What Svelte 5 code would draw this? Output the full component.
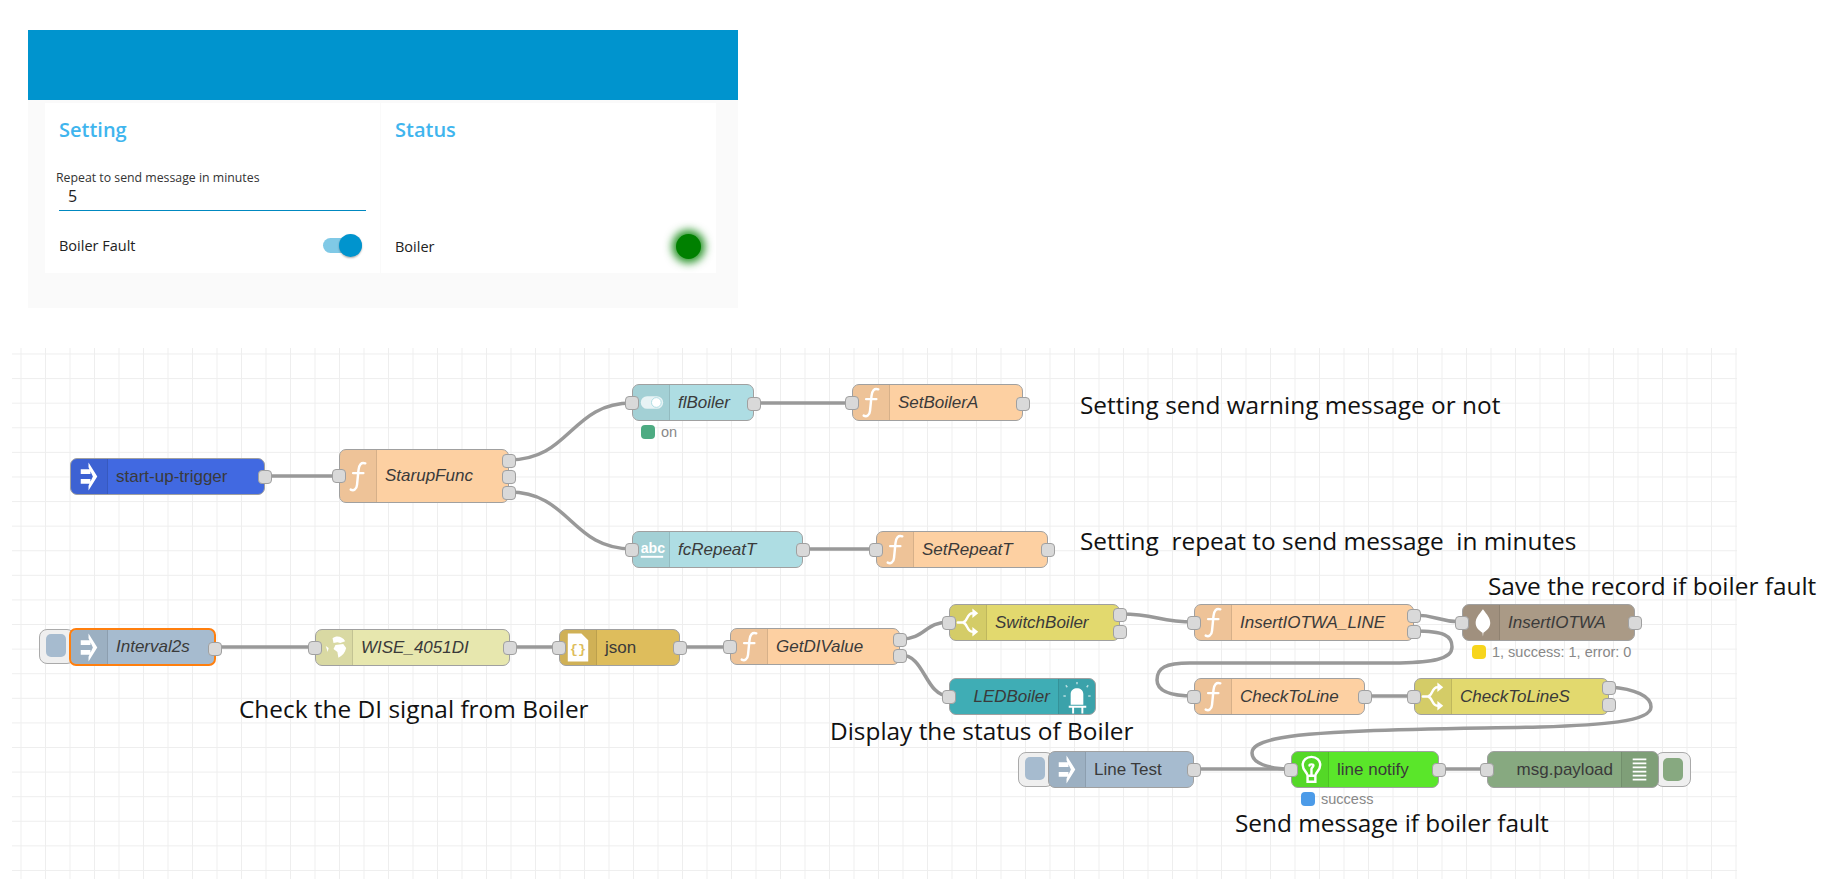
<script>
  // page coordinates of the editor canvas, node positions below are given in page px
  const ox = 12;
  const oy = 348;

  const nodes = [
    { label: 'start-up-trigger', x: 70, y: 458, w: 195, h: 37, color: '#4169e1', icon: 'inject', plain: true, out: [476] },
    { label: 'StarupFunc', x: 339, y: 449, w: 170, h: 54, color: '#fdd0a2', icon: 'func', inp: true, out: [460, 476, 492] },
    { label: 'flBoiler', x: 632, y: 384, w: 122, h: 37, color: '#aeddE3', icon: 'toggle', inp: true, out: [403], status: { color: '#4dab82', text: 'on', x: 641, y: 425 } },
    { label: 'SetBoilerA', x: 852, y: 384, w: 171, h: 37, color: '#fdd0a2', icon: 'func', inp: true, out: [403] },
    { label: 'fcRepeatT', x: 632, y: 531, w: 171, h: 37, color: '#aeddE3', icon: 'abc', inp: true, out: [549] },
    { label: 'SetRepeatT', x: 876, y: 531, w: 172, h: 37, color: '#fdd0a2', icon: 'func', inp: true, out: [549] },
    { label: 'Interval2s', x: 69, y: 628, w: 147, h: 38, color: '#a6bbcf', icon: 'inject', out: [647], btn: 'left', selected: true },
    { label: 'WISE_4051DI', x: 315, y: 629, w: 195, h: 37, color: '#e7e7ae', icon: 'globe', inp: true, out: [647] },
    { label: 'json', x: 559, y: 629, w: 121, h: 37, color: '#debd5c', icon: 'json', plain: true, inp: true, out: [647] },
    { label: 'GetDIValue', x: 730, y: 628, w: 170, h: 37, color: '#fdd0a2', icon: 'func', inp: true, out: [639, 655] },
    { label: 'SwitchBoiler', x: 949, y: 604, w: 171, h: 37, color: '#e2d96e', icon: 'switch', inp: true, out: [614, 631] },
    { label: 'LEDBoiler', x: 949, y: 678, w: 147, h: 37, color: '#3fadb5', icon: 'led', right: true, inp: true, out: [] },
    { label: 'InsertIOTWA_LINE', x: 1194, y: 604, w: 220, h: 37, color: '#fdd0a2', icon: 'func', inp: true, out: [615, 631] },
    { label: 'InsertIOTWA', x: 1462, y: 604, w: 173, h: 37, color: '#aa9a86', icon: 'leaf', inp: true, out: [622], status: { color: '#f7d51d', text: '1, success: 1, error: 0', x: 1472, y: 645 } },
    { label: 'CheckToLine', x: 1194, y: 678, w: 171, h: 37, color: '#fdd0a2', icon: 'func', inp: true, out: [696] },
    { label: 'CheckToLineS', x: 1414, y: 678, w: 195, h: 37, color: '#e2d96e', icon: 'switch', inp: true, out: [687, 704] },
    { label: 'Line Test', x: 1048, y: 751, w: 146, h: 37, color: '#a6bbcf', icon: 'inject', plain: true, out: [769], btn: 'left' },
    { label: 'line notify', x: 1291, y: 751, w: 148, h: 37, color: '#5ae62a', icon: 'bulb', plain: true, inp: true, out: [769], status: { color: '#4c9be8', text: 'success', x: 1301, y: 792 } },
    { label: 'msg.payload', x: 1487, y: 751, w: 172, h: 37, color: '#87a980', icon: 'debug', right: true, plain: true, inp: true, out: [], btn: 'right' }
  ];

  const links = [
    [265, 476, 339, 476],
    [509, 460, 632, 403],
    [509, 492, 632, 549],
    [754, 403, 852, 403],
    [803, 549, 876, 549],
    [216, 647, 315, 647],
    [510, 647, 559, 647],
    [680, 647, 730, 647],
    [901, 639, 949, 622],
    [901, 655, 949, 696],
    [1121, 614, 1194, 622],
    [1414, 615, 1462, 622],
    [1365, 696, 1414, 696],
    [1194, 769, 1291, 769],
    [1439, 769, 1487, 769]
  ];

  function bezier([x1, y1, x2, y2]) {
    const d = (x2 - x1) * 0.5;
    return `M${x1} ${y1}C${x1 + d} ${y1} ${x2 - d} ${y2} ${x2} ${y2}`;
  }

  // the two wires that double back under the row above
  const loops = [
    'M1414 631C1445 631 1452 636 1452 647C1452 660 1430 662 1400 663L1190 663C1165 663 1157 668 1157 680C1157 690 1168 696 1194 696',
    'M1610 687C1635 689 1651 696 1651 707C1651 722 1600 725 1540 727C1460 729 1320 729 1275 739C1258 743 1252 747 1252 753C1252 763 1268 769 1291 769'
  ];

  const notes = [
    { text: 'Setting send warning message or not', x: 1080, y: 404 },
    { text: 'Setting  repeat to send message  in minutes', x: 1080, y: 540 },
    { text: 'Save the record if boiler fault', x: 1488, y: 585 },
    { text: 'Check the DI signal from Boiler', x: 239, y: 708 },
    { text: 'Display the status of Boiler', x: 830, y: 730 },
    { text: 'Send message if boiler fault', x: 1235, y: 822 }
  ];

  const ledRays = [
    [7, 18, 4.500, 18], [30, 18, 32.500, 18], [8.500, 9, 7, 7], [28.500, 9, 30, 7], [18.500, 6, 18.500, 3.500]
  ];
</script>

<div class="panel">
  <div class="header"></div>
  <div class="groups">
    <section class="group">
      <h2>Setting</h2>
      <label class="field">
        <span>Repeat to send message in minutes</span>
        <input value="5" />
      </label>
      <div class="row">
        <span>Boiler Fault</span>
        <div class="switch"><i></i></div>
      </div>
    </section>
    <section class="group">
      <h2>Status</h2>
      <div class="row bottom">
        <span>Boiler</span>
        <div class="led"></div>
      </div>
    </section>
  </div>
</div>

<div class="canvas">
  <svg class="wires" width="1825" height="531" viewBox="{ox} {oy} 1825 531">
    {#each links as l}
      <path d={bezier(l)} />
    {/each}
    {#each loops as d}
      <path {d} />
    {/each}
  </svg>

  {#each nodes as n}
    {#if n.btn}
      <div
        class="btn {n.btn}"
        style="left:{n.btn === 'left' ? n.x - ox - 30 : n.x + n.w - ox - 4}px;top:{n.y - oy + 1}px"
      >
        <i style="background:{n.color}"></i>
      </div>
    {/if}
    <div
      class="node"
      class:selected={n.selected}
      class:right={n.right}
      style="left:{n.x - ox}px;top:{n.y - oy}px;width:{n.w}px;height:{n.h}px;background:{n.color}"
    >
      <div class="icon">
        <svg width="37" height="37" viewBox="0 0 37 37">
          {#if n.icon === 'func'}
            <path class="line" d="M26 5C22 3.500 19.500 6 19 12L17.500 27C17 32 14 33.500 11 32M13.500 15H24" />
          {:else if n.icon === 'inject'}
            <path class="solid" d="M10 11H20V16H10ZM10 21H20V26H10ZM18 4L27 18.500L18 33V28L22.500 18.500L18 9Z" />
          {:else if n.icon === 'toggle'}
            <rect x="8" y="12" width="23" height="13" rx="6.500" fill="#fff" opacity="0.75" />
            <circle cx="24" cy="18.500" r="5" fill="#fff" stroke="#aeddE3" stroke-width="1" />
          {:else if n.icon === 'abc'}
            <text x="8" y="22" class="abc">abc</text>
            <rect x="8" y="25" width="23" height="2" fill="#fff" />
          {:else if n.icon === 'globe'}
            <path class="solid" d="M17 9C21 6 27 7 30 12L25 14L22 13L18 14ZM20 16L28 15L31 19C30 24 27 27 23 29L22 23L18 20ZM10 17L13 19L12 23Z" />
          {:else if n.icon === 'json'}
            <path class="solid" d="M8 4H22L29 11V33H8Z" />
            <text x="18.500" y="24" class="brace">{'{}'}</text>
          {:else if n.icon === 'switch'}
            <path class="line" d="M8 18.500H13C18 18.500 17 9 23 9M13 18.500C18 18.500 17 28 23 28" />
            <path class="solid" d="M23 4L29 9L23 14ZM23 23L29 28L23 33Z" />
          {:else if n.icon === 'led'}
            <path class="solid" d="M12 27V16C12 8 25 8 25 16V27ZM10 28H28V30H10ZM13.500 30H15.500V36H13.500ZM23 30H25V36H23Z" />
            {#each ledRays as [x1, y1, x2, y2]}
              <line class="ray" {x1} {y1} {x2} {y2} />
            {/each}
          {:else if n.icon === 'leaf'}
            <path class="solid" d="M20.500 5C25 11 28 14 28 19C28 24 24 27 21 29L20.500 33L20 29C17 27 13 24 13 19C13 14 16 11 20.500 5Z" />
          {:else if n.icon === 'bulb'}
            <path class="line" d="M16 25C16 21 11 20 11 14C11 9 15 5.500 20 5.500C25 5.500 29 9 29 14C29 20 24 21 24 25ZM16 25V31H24V25M18 14.500C18 13 22 13 22 14.500C22 16 20 16.500 20 18V25" />
          {:else if n.icon === 'debug'}
            <path class="line thin" d="M11 8H25M11 12.200H25M11 16.400H25M11 20.600H25M11 24.800H25M11 29H25" />
          {/if}
        </svg>
      </div>
      <div class="label" class:plain={n.plain}>{n.label}</div>

      {#if n.inp}
        <span class="port in"></span>
      {/if}
      {#each n.out as y}
        <span class="port out" style="top:{y - n.y - 7}px"></span>
      {/each}
    </div>
    {#if n.status}
      <div class="status" style="left:{n.status.x - ox}px;top:{n.status.y - oy}px">
        <i style="background:{n.status.color}"></i>{n.status.text}
      </div>
    {/if}
  {/each}

  {#each notes as note}
    <div class="note" style="left:{note.x - ox}px;top:{note.y - oy}px">{note.text}</div>
  {/each}
</div>

<style>
  :global(body) {
    margin: 0;
    background: #fff;
    overflow: hidden;
  }

  .panel {
    width: 710px;
    margin: 30px 0 0 28px;
    background: #fafafa;
    font-family: "Open Sans", sans-serif;
    color: #222;
  }

  .header {
    height: 70px;
    background: #0094ce;
  }

  .groups {
    display: grid;
    grid-template-columns: 335px 335px;
    gap: 1px;
    padding: 3px 22px 35px 17px;
  }

  .group {
    height: 170px;
    padding: 0 14px;
    box-sizing: border-box;
    background: #fff;
    display: flex;
    flex-direction: column;
  }

  h2 {
    margin: 14px 0 0;
    font-size: 20px;
    line-height: 26px;
    font-weight: 600;
    color: #3fb5ee;
  }

  .field {
    display: block;
    margin: 27px 0 0 -3px;
    font-size: 12.300px;
    line-height: 16px;
  }

  .field span {
    display: block;
    color: #333;
  }

  input {
    display: block;
    box-sizing: border-box;
    width: 307px;
    height: 25px;
    margin-left: 3px;
    padding: 0 0 4px 9px;
    border: 0;
    border-bottom: 1.5px solid #0088c0;
    outline: 0;
    font: 16px "Open Sans", sans-serif;
    color: #222;
    background: transparent;
  }

  .row {
    display: flex;
    align-items: center;
    justify-content: space-between;
    margin-top: 21px;
    height: 26px;
    font-size: 14.500px;
  }

  .row.bottom {
    margin-top: auto;
    margin-bottom: 14px;
  }

  .switch {
    position: relative;
    width: 39px;
    height: 15px;
    margin-right: 4px;
    border-radius: 8px;
    background: #80c9e6;
  }

  .switch i {
    position: absolute;
    right: 0;
    top: -4px;
    width: 23px;
    height: 23px;
    border-radius: 50%;
    background: #0094ce;
    box-shadow: 0 1px 2px rgba(0, 0, 0, 0.3);
  }

  .led {
    width: 25px;
    height: 25px;
    margin-right: 1px;
    border-radius: 50%;
    background: #008000;
    box-shadow: 0 0 8px 4px rgba(0, 128, 0, 0.85);
  }

  .canvas {
    position: relative;
    width: 1725px;
    height: 531px;
    margin: 40px 0 0 12px;
    background-color: #fff;
    background-image:
      linear-gradient(#eee 1px, transparent 1px),
      linear-gradient(90deg, #eee 1px, transparent 1px);
    background-size: 24.500px 24.600px;
    background-position: 8.500px 5.500px;
  }

  .wires {
    position: absolute;
    left: 0;
    top: 0;
    overflow: visible;
  }

  .wires path {
    fill: none;
    stroke: #999;
    stroke-width: 3.500;
  }

  .node {
    position: absolute;
    display: flex;
    box-sizing: border-box;
    border: 1.500px solid #a0a0a0;
    border-radius: 7px;
    font: italic 17px "Liberation Sans", Arial, sans-serif;
    color: #3a3a3a;
  }

  .node.selected {
    border: 2px solid #ff7f0e;
  }

  .node.right {
    flex-direction: row-reverse;
  }

  .icon {
    flex: none;
    width: 36px;
    display: flex;
    align-items: center;
    justify-content: center;
    background: rgba(0, 0, 0, 0.06);
    border-right: 1px solid rgba(0, 0, 0, 0.1);
    border-radius: 6px 0 0 6px;
  }

  .node.right .icon {
    border-right: 0;
    border-left: 1px solid rgba(0, 0, 0, 0.1);
    border-radius: 0 6px 6px 0;
  }

  .label {
    flex: 1;
    min-width: 0;
    align-self: center;
    padding: 0 8px;
    white-space: nowrap;
  }

  .label.plain {
    font-style: normal;
  }

  .node.right .label {
    text-align: right;
  }

  .line {
    fill: none;
    stroke: #fff;
    stroke-width: 2.500;
    stroke-linecap: round;
  }

  .line.thin {
    stroke-width: 1.800;
    stroke-linecap: butt;
  }

  .solid {
    fill: #fff;
  }

  .ray {
    stroke: #fff;
    stroke-width: 1.500;
    opacity: 0.65;
  }

  .abc {
    font: bold 14.500px "Liberation Sans", Arial, sans-serif;
    fill: #fff;
  }

  .brace {
    font: bold 14px "Liberation Mono", monospace;
    fill: #debd5c;
    text-anchor: middle;
  }

  .port {
    position: absolute;
    box-sizing: border-box;
    width: 14px;
    height: 14px;
    border: 1.500px solid #a0a0a0;
    border-radius: 4px;
    background: #d9d9d9;
  }

  .port.in {
    left: -8px;
    top: calc(50% - 7px);
  }

  .port.out {
    right: -8px;
  }

  .btn {
    position: absolute;
    box-sizing: border-box;
    width: 36px;
    height: 35px;
    border: 1.500px solid #aaa;
    border-radius: 8px;
    background: #efefef;
  }

  .btn.left {
    padding: 4px 0 0 6px;
  }

  .btn.right {
    padding: 5px 0 0 7px;
  }

  .btn i {
    display: block;
    width: 20px;
    height: 23px;
    border-radius: 5px;
  }

  .status {
    position: absolute;
    display: flex;
    align-items: center;
    gap: 6px;
    height: 14px;
    font: 14.500px "Liberation Sans", Arial, sans-serif;
    color: #888;
    white-space: nowrap;
  }

  .status i {
    width: 14px;
    height: 14px;
    border-radius: 4px;
  }

  .note {
    position: absolute;
    transform: translateY(-50%);
    font: 24.400px "Open Sans", sans-serif;
    color: #111;
    white-space: pre;
  }
</style>
